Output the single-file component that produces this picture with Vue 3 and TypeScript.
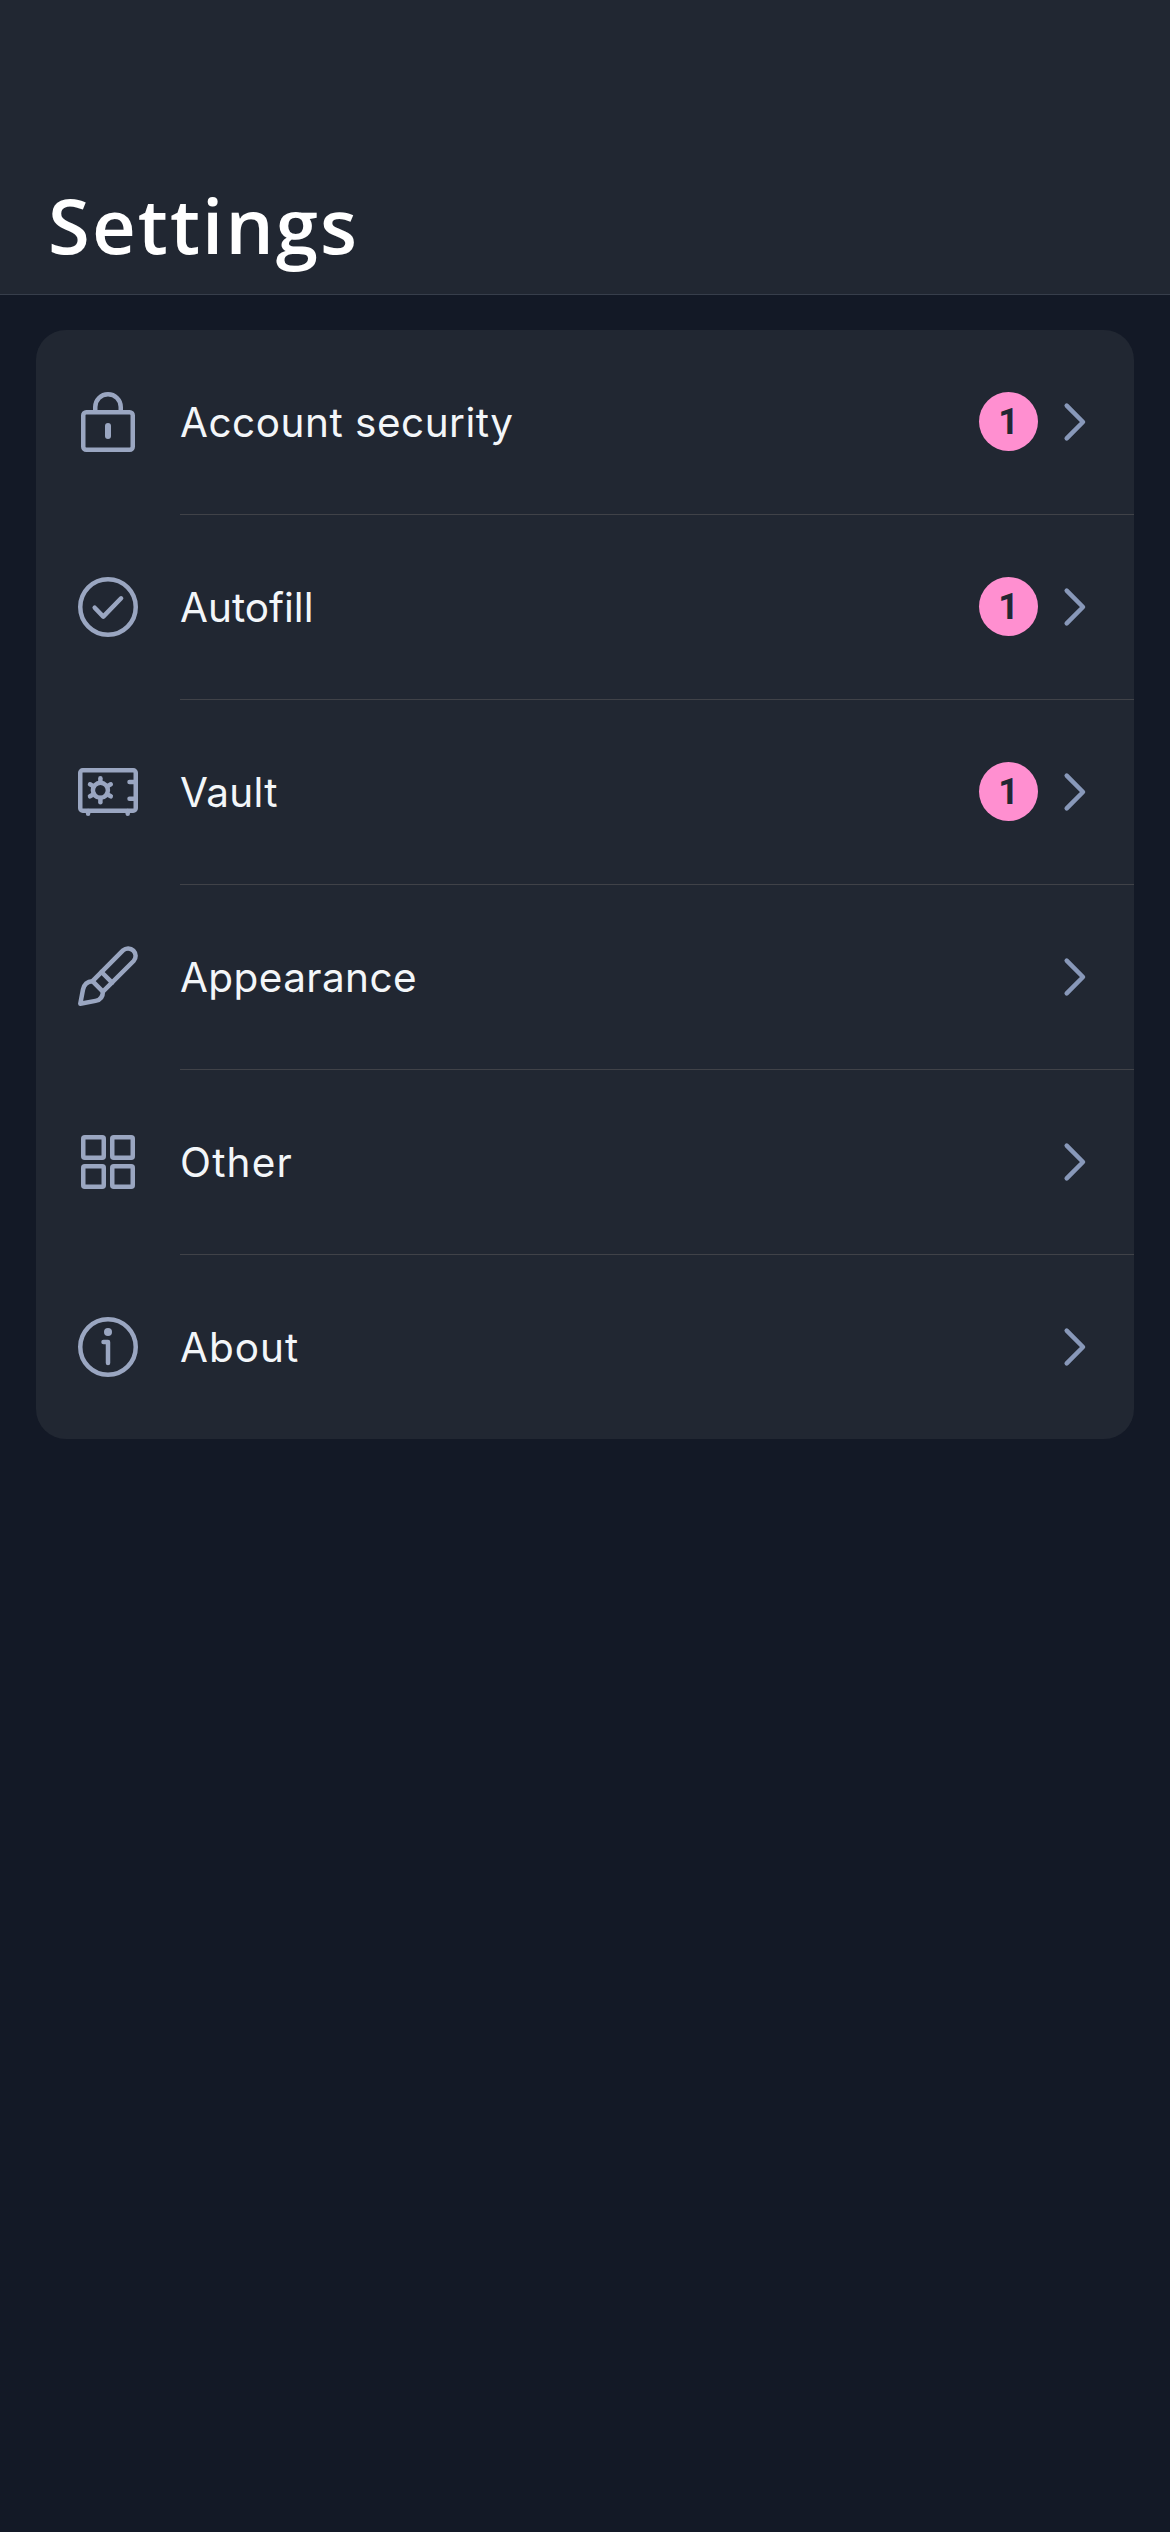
<script setup lang="ts">
type IconName = 'lock' | 'check' | 'vault' | 'brush' | 'grid' | 'info'

interface SettingsItem {
  label: string
  icon: IconName
  badge?: number
  tracking: number
}

const items: SettingsItem[] = [
  { label: 'Account security', icon: 'lock', badge: 1, tracking: 0.5 },
  { label: 'Autofill', icon: 'check', badge: 1, tracking: 0 },
  { label: 'Vault', icon: 'vault', badge: 1, tracking: 0.3 },
  { label: 'Appearance', icon: 'brush', tracking: 0.4 },
  { label: 'Other', icon: 'grid', tracking: 1.2 },
  { label: 'About', icon: 'info', tracking: 1 },
]

const spokes = [0, 60, 120, 180, 240, 300]
</script>

<template>
  <div class="screen">
    <header class="header">
      <h1 class="title">Settings</h1>
    </header>
    <main class="content">
      <ul class="card">
        <li v-for="item in items" :key="item.label" class="row">
          <svg class="icon" viewBox="0 0 72 72" aria-hidden="true">
            <g v-if="item.icon === 'lock'">
              <rect x="11.25" y="26.25" width="49.5" height="37.5" rx="3" />
              <path d="M23.25 26V21a12.75 12.75 0 0 1 25.5 0v5" stroke-linecap="butt" />
              <path d="M36 40v10" stroke-width="6" />
            </g>
            <g v-else-if="item.icon === 'check'">
              <circle cx="36" cy="36" r="27.75" />
              <path d="M22.7 36.7l8.6 8.9L49.1 27.3" />
            </g>
            <g v-else-if="item.icon === 'vault'">
              <rect x="8.25" y="14.25" width="55.5" height="40.5" rx="2.5" />
              <path d="M57.5 26H63M57.5 42.8H63M16.1 55v2.8M55.7 55v2.8" />
              <circle cx="28.4" cy="34.3" r="7.5" />
              <path
                v-for="angle in spokes"
                :key="angle"
                d="M28.4 26.5v-4.2"
                :transform="`rotate(${angle} 28.4 34.3)`"
              />
            </g>
            <g v-else-if="item.icon === 'brush'">
              <path d="M51 9.4a7.5 7.5 0 0 1 10.6 10.6L30.9 50.7c0 5.5-2.3 8.2-7.4 9.2L8.3 62.7l2.7-14.2c1.1-5.3 4-8 9.5-8.3z" />
              <path d="M29.5 31l10.6 10.6M20.5 40.2l10.4 10.5" />
            </g>
            <g v-else-if="item.icon === 'grid'">
              <rect x="11.25" y="11.25" width="20.5" height="20.5" rx="1.5" />
              <rect x="40.25" y="11.25" width="20.5" height="20.5" rx="1.5" />
              <rect x="11.25" y="40.25" width="20.5" height="20.5" rx="1.5" />
              <rect x="40.25" y="40.25" width="20.5" height="20.5" rx="1.5" />
            </g>
            <g v-else>
              <circle cx="36" cy="36" r="27.75" />
              <circle class="dot" cx="36" cy="21" r="4" />
              <path d="M31.5 31.1H36V52" />
            </g>
          </svg>
          <div class="body">
            <span class="label" :style="{ letterSpacing: `${item.tracking}px` }">{{ item.label }}</span>
            <span v-if="item.badge" class="badge">{{ item.badge }}</span>
            <svg class="chevron" viewBox="0 0 24 40" aria-hidden="true">
              <path d="M3.7 3.7L20 20L3.7 36.3" />
            </svg>
          </div>
        </li>
      </ul>
    </main>
  </div>
</template>

<style>
body {
  background: #131926;
}
</style>

<style scoped>
.screen {
  min-height: 2532px;
  background: #131926;
  font-family: Inter, 'Open Sans', sans-serif;
}

.header {
  box-sizing: border-box;
  height: 295px;
  display: flex;
  align-items: flex-end;
  padding: 0 48px 19px;
  background: #212732;
  border-bottom: 1px solid #373e4b;
}

.title {
  margin: 0;
  font: 600 76px/100px 'Open Sans', sans-serif;
  letter-spacing: 2.1px;
  color: #fff;
}

.content {
  padding: 35px 36px;
}

.card {
  margin: 0;
  padding: 0;
  list-style: none;
  background: #212732;
  border-radius: 30px;
  overflow: hidden;
}

.row {
  display: flex;
  align-items: stretch;
  gap: 36px;
  padding-left: 36px;
}

.icon {
  width: 72px;
  height: 72px;
  margin-top: 56px;
  flex: none;
  fill: none;
  stroke: #9aa6c1;
  stroke-width: 4.5;
  stroke-linecap: round;
  stroke-linejoin: round;
}

.dot {
  fill: #9aa6c1;
  stroke: none;
}

.body {
  flex: 1;
  display: flex;
  align-items: center;
  height: 184px;
  border-bottom: 1px solid #404248;
}

.row:last-child .body {
  border-bottom: 0;
}

.label {
  flex: 1;
  padding-top: 2px;
  font-size: 40.5px;
  line-height: 52px;
  white-space: nowrap;
  color: #f3f6f9;
}

.badge {
  width: 59px;
  height: 59px;
  margin: 0 25px 1px 0;
  border-radius: 50%;
  background: #ff8fd0;
  color: #212732;
  font: 700 36px/60px Roboto, sans-serif;
  text-align: center;
}

.chevron {
  width: 24px;
  height: 40px;
  margin-right: 47px;
  fill: none;
  stroke: #8898b9;
  stroke-width: 4.5;
  stroke-linecap: round;
  stroke-linejoin: round;
}
</style>
